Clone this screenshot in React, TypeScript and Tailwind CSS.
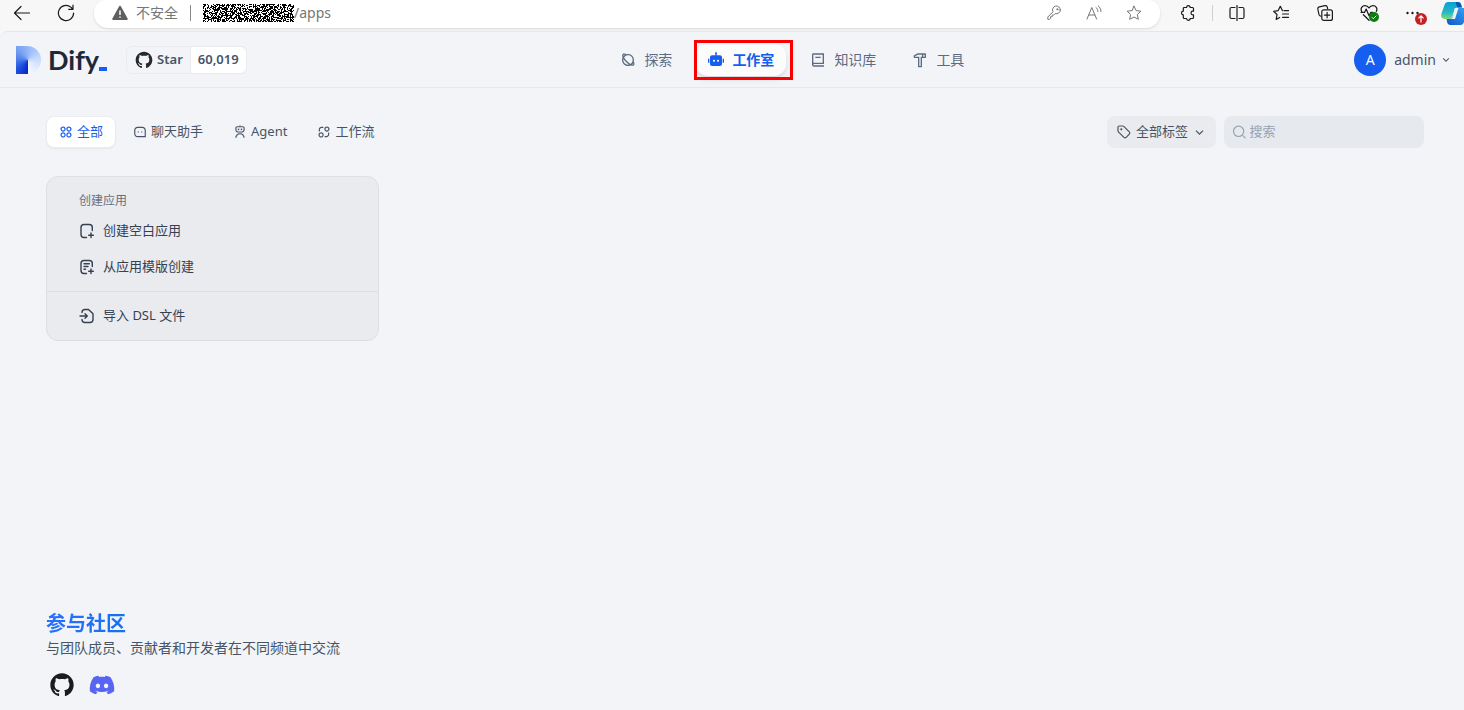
import type { ReactNode } from "react";
import {
  RiApps2Line,
  RiArrowDownSLine,
  RiBook2Line,
  RiDiscordFill,
  RiExchange2Line,
  RiGithubFill,
  RiHammerLine,
  RiMessage3Line,
  RiPlanetLine,
  RiRobot2Fill,
  RiRobot3Line,
} from "react-icons/ri";

type IconProps = { className?: string };

const Stroke = ({ className = "size-4", box = 16, width = 1, children }: IconProps & { box?: number; width?: number; children: ReactNode }) => (
  <svg
    className={className}
    viewBox={`0 0 ${box} ${box}`}
    fill="none"
    stroke="currentColor"
    strokeWidth={width}
    strokeLinecap="round"
    strokeLinejoin="round"
    aria-hidden="true"
  >
    {children}
  </svg>
);

// The host name is scrambled with deterministic noise
const NOISE_W = 91;
const NOISE_H = 18;
const noisePath = (() => {
  let seed = 7919;
  let d = "";
  for (let y = 0; y < NOISE_H; y++) {
    for (let x = 0; x < NOISE_W; x++) {
      seed = (seed * 1103515245 + 12345) % 2147483648;
      if (seed / 2147483648 < 0.55) d += `M${x} ${y}h1v1h-1z`;
    }
  }
  return d;
})();

const STAR = "M8 1.2l2.1 4.4 4.8.6-3.5 3.3.9 4.8L8 12l-4.3 2.3.9-4.8L1.1 6.2l4.8-.6z";

const ToolButton = ({ label, children }: { label: string; children: ReactNode }) => (
  <button type="button" aria-label={label} className="relative flex size-6 items-center justify-center">
    {children}
  </button>
);

const BrowserBar = () => (
  <div className="flex h-[31px] shrink-0 items-start bg-[#f7f7f7] pl-[10px] text-[#1b1b1b]">
    <div className="flex h-[26px] items-center gap-5">
      <ToolButton label="返回">
        <Stroke className="size-[18px]" box={18} width={1.2}>
          <path d="M16.5 9H1.5M8 2.500L1.500 9 8 15.500" />
        </Stroke>
      </ToolButton>
      <ToolButton label="刷新">
        <Stroke className="size-[18px]" box={18} width={1.2}>
          <path d="M16.6 9A7.6 7.6 0 1 1 13.8 3.1L16 5.2M16 1v4.3h-4.3" />
        </Stroke>
      </ToolButton>
    </div>

    <div className="ml-4 flex h-7 flex-1 items-center rounded-t-xl rounded-b-[14px] bg-white pr-[14px] pb-[2px] pl-[18px] text-sm text-[#767676] shadow-sm">
      <svg className="size-4" viewBox="0 0 16 16" aria-hidden="true">
        <path d="M8 .8c.5 0 .8.2 1 .6l6.6 12c.4.8 0 1.6-.9 1.6H1.300C.4 15 0 14.200.4 13.400l6.600-12c.2-.4.5-.6 1-.6z" fill="#5f5f5f" />
        <path d="M8 5.500v4.500M8 11.600v1.200" stroke="#fff" strokeWidth="1.500" />
      </svg>
      <span className="ml-2">不安全</span>
      <span className="mx-3 h-4 w-px bg-[#8a8a8a]" />
      <svg className="h-[18px] w-[91px]" viewBox={`0 0 ${NOISE_W} ${NOISE_H}`} shapeRendering="crispEdges" aria-hidden="true">
        <path d={noisePath} fill="#000" />
      </svg>
      <span className="flex-1">/apps</span>
      <div className="flex items-center gap-4">
        <ToolButton label="密码">
          <Stroke>
            <path d="M14.300 5a3.800 3.800 0 0 1-5.100 3.600L7.700 10.100H6.200v1.600H4.600v1.600l-1 1H1.800v-2.300l5.200-5.200A3.900 3.900 0 1 1 14.300 5z" />
            <circle cx="11.300" cy="4.300" r=".6" />
          </Stroke>
        </ToolButton>
        <ToolButton label="朗读">
          <Stroke>
            <path d="M1 14L5.800 2.500 10.600 14M2.800 10h6M10 2.500c1.300 1 1.900 2.400 1.900 4M12.300 1c1.800 1.400 2.700 3.400 2.700 5.700" />
          </Stroke>
        </ToolButton>
        <ToolButton label="收藏">
          <Stroke>
            <path d={STAR} />
          </Stroke>
        </ToolButton>
      </div>
    </div>

    <div className="ml-4 flex h-[26px] items-center gap-5">
      <div className="flex items-center gap-3">
        <ToolButton label="扩展">
          <Stroke width={1.2}>
            <path d="M5 2.500h1.600a1.800 1.800 0 0 1 3.600 0h2.300a1 1 0 0 1 1 1v2.700h-.7a1.800 1.800 0 0 0 0 3.600h.7v2.700a1 1 0 0 1-1 1h-2.300a1.800 1.800 0 0 1-3.600 0H4.300a1 1 0 0 1-1-1V9.800a1.800 1.800 0 0 1 0-3.600V3.500a1 1 0 0 1 1-1z" />
          </Stroke>
        </ToolButton>
        <span className="h-4 w-px bg-[#d0d0d0]" />
        <ToolButton label="分屏">
          <Stroke width={1.2}>
            <path d="M6 2.500H2.500a1.500 1.500 0 0 0-1.500 1.500v8a1.500 1.500 0 0 0 1.500 1.500H6M10 2.500h3.500A1.500 1.500 0 0 1 15 4v8a1.500 1.500 0 0 1-1.500 1.500H10M8 .500v15" />
          </Stroke>
        </ToolButton>
      </div>
      <ToolButton label="收藏夹">
        <Stroke width={1.2}>
          <path d="M9.500 5.700L7.300 1.300 5.200 5.600l-4.600.7L4 9.500l-.8 4.900 3.500-1.900M11 5.700h4.500M9.500 9h6M9.500 12.300h6" />
        </Stroke>
      </ToolButton>
      <ToolButton label="集锦">
        <Stroke width={1.2}>
          <path d="M3.700 11.200A2 2 0 0 1 2 9.700L.8 4A2 2 0 0 1 2.300 1.800L8 .600a2 2 0 0 1 2.300 1.500l.3 1.500" />
          <rect x="4.800" y="4.800" width="10.600" height="10.600" rx="2" />
          <path d="M10.100 7.400v5.400M7.400 10.100h5.400" />
        </Stroke>
      </ToolButton>
      <ToolButton label="浏览器概要">
        <Stroke className="size-[18px]" width={1.1}>
          <path d="M1.500 6.500C0 4 2 1.500 4.500 1.500 6 1.500 7.200 2.300 8 3.500c.8-1.200 2-2 3.500-2C14 1.500 16 4 14.500 6.500M1 7.500h3l1.500-3 2.500 6 1.500-3h2M3 9.500l5 5" />
        </Stroke>
        <svg className="absolute right-[2px] bottom-[3px] size-[10px]" viewBox="0 0 10 10" aria-hidden="true">
          <circle cx="5" cy="5" r="5" fill="#107c10" />
          <path d="M2.800 5.200l1.500 1.500 3-3" fill="none" stroke="#fff" />
        </svg>
      </ToolButton>
      <ToolButton label="设置及其他">
        <svg className="size-4" viewBox="0 0 16 16" fill="currentColor" aria-hidden="true">
          <circle cx="2.500" cy="8" r="1.200" />
          <circle cx="7.500" cy="8" r="1.200" />
          <circle cx="12.500" cy="8" r="1.200" />
        </svg>
        <svg className="absolute -right-[2px] bottom-0 size-3" viewBox="0 0 12 12" aria-hidden="true">
          <circle cx="6" cy="6" r="6" fill="#c42020" />
          <path d="M6 9.500V3M3.500 5.300L6 2.800l2.500 2.500" fill="none" stroke="#fff" strokeWidth="1.200" />
        </svg>
      </ToolButton>
      <button type="button" aria-label="Copilot" className="-ml-1 w-[23px] shrink-0 overflow-hidden">
        <svg className="h-[23px] w-[26px] max-w-none" viewBox="0 0 26 23" aria-hidden="true">
          <defs>
            <linearGradient id="copilotLeft" x1="0" y1="0" x2="0" y2="1">
              <stop offset="0" stopColor="#0c9fd8" />
              <stop offset=".6" stopColor="#23b8c4" />
              <stop offset="1" stopColor="#7ddc72" />
            </linearGradient>
            <linearGradient id="copilotRight" x1="0" y1="1" x2="1" y2="0">
              <stop offset="0" stopColor="#0f57c8" />
              <stop offset="1" stopColor="#36a5f5" />
            </linearGradient>
          </defs>
          <path d="M7 0h10c2 0 3 1 3.500 3l.8 2.500h-4.500c-2 0-3 1-3.600 3L11.500 14c-.6 2-1.800 3-3.500 3H4c-3 0-4.500-2-3.500-5.500l2.800-8C4 1.200 5 0 7 0z" fill="url(#copilotLeft)" />
          <path d="M14.500 0H16c2.500 0 3.500 1 4 3l.8 2.500h-4.500z" fill="#0a56ae" />
          <path d="M22 6c3 0 5 2 4 5.500l-2.800 8C22.500 21.800 21.500 23 19.500 23h-10c-2 0-2.800-1-3.300-2.500L5.500 17H8c2 0 3.500-1 4.200-3L14 8.500C14.800 6.500 16 6 18 6z" fill="url(#copilotRight)" />
          <path d="M13.800 6h3.700l-3.500 11H9.500c1.300-.5 2.200-1.500 2.700-3z" fill="#e8f6fb" />
        </svg>
      </button>
    </div>
  </div>
);

const navItems = [
  { name: "探索", icon: RiPlanetLine, active: false },
  { name: "工作室", icon: RiRobot2Fill, active: true },
  { name: "知识库", icon: RiBook2Line, active: false },
  { name: "工具", icon: RiHammerLine, active: false },
];

const Header = () => (
  <header className="flex h-14 items-center justify-between border-b border-[#e6e8ec] pr-3 pl-4">
    <div className="flex items-center gap-[19px]">
      <a href="#" aria-label="Dify" className="flex items-center">
        <span className="h-7 w-[25px] rounded-r-full bg-[conic-gradient(from_0deg_at_48%_50%,#94b6f8_0deg,#b9d2fc_60deg,#d5e4fd_110deg,#f6f9ff_179deg,#0727c4_181deg,#1d4fdf_225deg,#5485ec_280deg,#7ba2f1_320deg,#94b6f8_360deg)]" />
        <span className="ml-[7px] font-['Lato','Open_Sans',sans-serif] text-[27px] leading-8 font-bold text-[#1d2939]">Dify</span>
        <span className="mt-[19px] h-1 w-2 bg-[#155eef]" />
      </a>
      <a href="#" className="flex h-7 items-center rounded-md border border-[#e9ebef] text-[13px] font-semibold text-[#475467]">
        <span className="flex h-full items-center gap-[3px] px-[7px]">
          <RiGithubFill className="size-5 text-[#24292f]" />
          Star
        </span>
        <span className="flex h-full items-center rounded-r-md border-l border-[#e9ebef] bg-white px-[7px]">60,019</span>
      </a>
    </div>

    <nav className="mr-4 flex items-center gap-3">
      {navItems.map(({ name, icon: Icon, active }) =>
        active ? (
          <a key={name} href="#" aria-current="page" className="relative flex h-8 items-center gap-2 rounded-xl bg-[#fcfcfd] px-3 text-sm font-semibold text-[#155eef] shadow-md">
            <Icon className="size-4" />
            {name}
            <span className="absolute -inset-y-1 -right-[7px] -left-[2px] border-3 border-[#fa0000]" />
          </a>
        ) : (
          <a key={name} href="#" className="flex h-8 items-center gap-2 px-3 text-sm text-[#5d6b82]">
            <Icon className="size-4" />
            {name}
          </a>
        )
      )}
    </nav>

    <button type="button" className="flex items-center text-sm text-[#475467]">
      <span className="mr-2 flex size-8 items-center justify-center rounded-full bg-[#155eef] text-white">A</span>
      admin
      <RiArrowDownSLine className="ml-1 size-3" />
    </button>
  </header>
);

const tabs = [
  { name: "全部", icon: RiApps2Line, active: true },
  { name: "聊天助手", icon: RiMessage3Line, active: false },
  { name: "Agent", icon: RiRobot3Line, active: false },
  { name: "工作流", icon: RiExchange2Line, active: false },
];

const FilterRow = () => (
  <div className="flex items-center justify-between pt-7 pb-7">
    <div className="flex gap-1">
      {tabs.map(({ name, icon: Icon, active }) => (
        <button
          key={name}
          type="button"
          className={
            active
              ? "flex h-8 items-center gap-1 rounded-lg border border-[#eaecf0] bg-white px-3 text-[13px] text-[#155eef] shadow-xs"
              : "flex h-8 items-center gap-1 rounded-lg border border-transparent px-3 text-[13px] text-[#475467]"
          }
        >
          <Icon className="size-[14px]" />
          {name}
        </button>
      ))}
    </div>
    <div className="flex items-center gap-2">
      <button type="button" className="flex h-8 items-center rounded-lg bg-[#eaebef] px-[9px] text-[13px] text-[#475467]">
        <Stroke className="mr-1 size-4" width={1.2}>
          <path d="M2 5.300V3.200C2 2.500 2.500 2 3.200 2h3.500c.5 0 .8.100 1.100.400l5.500 5.500c.7.700.7 1.600 0 2.300l-3.100 3.100c-.7.700-1.600.7-2.300 0L2.400 7.800C2.100 7.500 2 7.200 2 6.700z" />
          <circle cx="5.300" cy="5.300" r=".5" />
        </Stroke>
        全部标签
        <RiArrowDownSLine className="ml-1 size-[15px]" />
      </button>
      <label className="flex h-8 w-[200px] items-center gap-[3px] rounded-lg bg-[#e6e9ee] px-2 text-[#98a2b3]">
        <Stroke width={1.3}>
          <circle cx="7.300" cy="7.300" r="5.700" />
          <path d="M14.500 14.500l-2.500-2.500" />
        </Stroke>
        <input type="text" aria-label="搜索" placeholder="搜索" className="w-full min-w-0 bg-transparent text-[13px] outline-none placeholder:text-[#98a2b3]" />
      </label>
    </div>
  </div>
);

const FilePlus = ({ lines = false }: { lines?: boolean }) => (
  <Stroke width={1.4}>
    <path d="M13.300 7.500V4.500c0-2-.8-3-3-3H5c-2.200 0-3 1-3 3v7c0 2 .8 3 3 3h2.500M12 10v4.500M9.700 12.200h4.600" />
    {lines && <path d="M5 4.700h5.300M5 7.500h4M5 10.300h1.500" />}
  </Stroke>
);

const FileArrow = () => (
  <Stroke width={1.4}>
    <path d="M3 4.500c0-2 .9-3 3-3h3.500l4.500 4.300v5.700c0 2-.9 3-3 3H6c-2.100 0-3-1-3-3M1 8h7M6 5.700L8.300 8 6 10.300" />
  </Stroke>
);

const CreateItem = ({ icon, children }: { icon: ReactNode; children: ReactNode }) => (
  <button type="button" className="flex h-8 w-full items-center gap-2 px-6 text-[13px] text-[#354052]">
    {icon}
    {children}
  </button>
);

const CreateCard = () => (
  <section className="rounded-xl border border-[#dcdfe4] bg-[#eaebef]">
    <div className="p-2">
      <h2 className="px-6 pt-[7px] pb-[5px] text-xs leading-[18px] text-[#676f83]">创建应用</h2>
      <div className="flex flex-col gap-1">
        <CreateItem icon={<FilePlus />}>创建空白应用</CreateItem>
        <CreateItem icon={<FilePlus lines />}>从应用模版创建</CreateItem>
      </div>
    </div>
    <div className="border-t border-[#dcdfe4] p-2">
      <CreateItem icon={<FileArrow />}>导入 DSL 文件</CreateItem>
    </div>
  </section>
);

const Footer = () => (
  <footer className="pr-10 pb-[11px] pl-[46px]">
    <h3 className="w-fit bg-linear-to-r from-[#2970ff] to-[#1570ef] bg-clip-text text-xl leading-6 font-bold text-transparent">参与社区</h3>
    <p className="text-sm leading-6 text-[#475467]">与团队成员、贡献者和开发者在不同频道中交流</p>
    <div className="mt-[11px] flex gap-3 pl-[2px]">
      <a href="#" aria-label="GitHub">
        <RiGithubFill className="size-7 text-[#1b1b1f]" />
      </a>
      <a href="#" aria-label="Discord">
        <RiDiscordFill className="size-7 text-[#5865f2]" />
      </a>
    </div>
  </footer>
);

export default function App() {
  return (
    <div className="flex min-h-screen flex-col bg-[#f7f7f7] font-['Noto_Sans','Noto_Sans_CJK_SC',sans-serif]">
      <BrowserBar />
      <div className="flex flex-1 flex-col rounded-tl-lg border-t border-[#e6e6e8] bg-[#f2f4f8]">
        <Header />
        <main className="flex-1 pr-10 pl-[46px]">
          <FilterRow />
          <div className="grid grid-cols-4 gap-4">
            <CreateCard />
          </div>
        </main>
        <Footer />
      </div>
    </div>
  );
}
